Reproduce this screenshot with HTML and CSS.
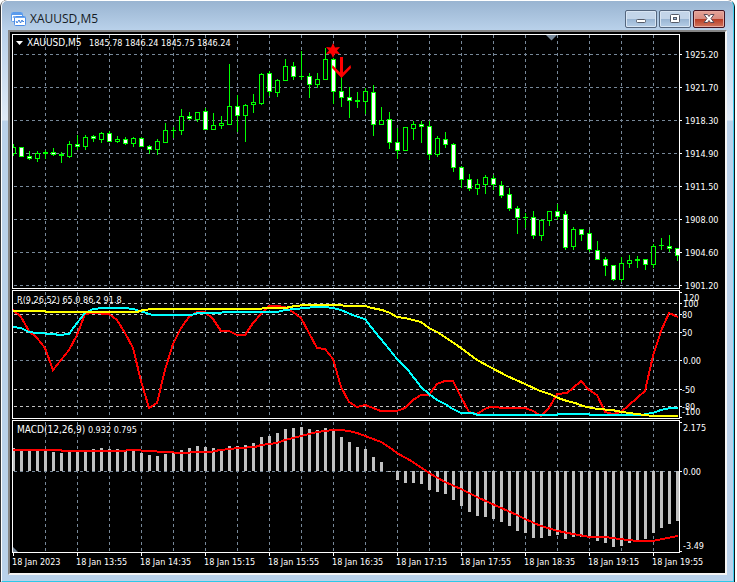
FILE: index.html
```html
<!DOCTYPE html>
<html lang="en">
<head>
<meta charset="utf-8">
<meta name="viewport" content="width=device-width, initial-scale=1">
<title>XAUUSD,M5</title>
<link rel="stylesheet" href="styles.css">
</head>
<body>
<main class="window">
  <div class="frame">
    <header class="titlebar">
      <svg class="app-icon" viewBox="0 0 15 14" aria-hidden="true">
        <rect x=".5" y=".5" width="11" height="9" rx="1" fill="#fff" stroke="#5b9bec"/>
        <path d="M1 2h10" stroke="#5b9bec" stroke-width="2"/>
        <path d="M2 6l1-2 1 2 1-1" fill="none" stroke="#78a8ea"/>
        <rect x="3.500" y="4.500" width="11" height="9" rx="1" fill="#fff" stroke="#4d8ee8"/>
        <path d="M4 5.500h10" stroke="#6aa5ef" stroke-width="1"/>
        <path d="M5 9l1 2 2-3 1.500 3 1.500-3 1 2 1-1" fill="none" stroke="#3f83df"/>
      </svg>
      <h1 class="title">XAUUSD,M5</h1>
      <div class="controls">
        <button class="control" type="button" aria-label="Minimize">
          <svg viewBox="0 0 12 10"><rect x="1.500" y="5.500" width="9" height="3" rx="1" fill="#fff" stroke="#555b68"/></svg>
        </button>
        <button class="control" type="button" aria-label="Maximize">
          <svg viewBox="0 0 12 10"><rect x="1.500" y=".5" width="9" height="8" rx="1" fill="#fff" stroke="#555b68"/><rect x="4.500" y="3.500" width="3" height="2" fill="#9bb8d6" stroke="#555b68"/></svg>
        </button>
        <button class="control close" type="button" aria-label="Close">
          <svg viewBox="0 0 12 10"><path d="M1 .5h3.500L6 2.500 7.500.5H11L8 4.500l3 4H7.500L6 6.500l-1.500 2H1l3-4z" fill="#fff" stroke="#5b4a55"/></svg>
        </button>
      </div>
    </header>
    <section class="client" aria-label="Chart">
      <svg class="panel" id="price" viewBox="10 32 715 257">
        <g class="grid"></g>
        <g class="marks" clip-path="url(#plot-area)"></g>
        <clipPath id="plot-area"><rect x="13" y="35" width="666" height="253"/></clipPath>
        <path class="edge" d="M12.500 289V34.500H679.500V288.500H12.500"/>
        <path class="marker" d="M546 35h11l-5.500 5.500z"/>
        <path class="signal" d="M333 43l2 4.500 5-.5-3 3.500 3 3.500-5-.5-2 4.500-2-4.500-5 .5 3-3.500-3-3.500 5 .5z"/>
        <path class="signal" d="M340 57h3v15.500l7.500-7.500.5 3-9.500 10-9.500-10 .5-3 7.500 7.500z"/>
        <path class="caret" d="M16 41h7l-3.500 4z"/>
        <text class="name" x="27" y="46">XAUUSD,M5</text>
        <text x="89" y="46">1845.78 1846.24 1845.75 1846.24</text>
        <g class="axis"></g>
      </svg>
      <svg class="panel" id="range" viewBox="10 289 715 130">
        <g class="grid"></g>
        <path class="edge" d="M12.500 419V290.500H679.500V418.500H12.500M680 292.500h1M680 417.500h1"/>
        <polyline class="line red" points="13,310 21,317 29,331 37,338 45,348 53,370 61,360 69,350 77,335 85,314 93,313 109,314 117,320 125,333 133,348 141,381 149,408 157,403 165,370 173,344 181,328 189,317 197,312 205,312 213,319 221,331 229,331 237,335 245,335 253,323 261,314 269,306 277,306 285,307 293,312 301,318 309,333 317,348 325,349 333,359 341,387 349,402 357,407 365,405 373,408 381,411 397,411 405,408 413,400 421,395 429,395 437,384 445,381 453,381 461,397 469,412 477,414 485,409 490,407 497,407 501,408 525,408 533,411 541,416 549,408 557,394 567,393 573,388 581,381 589,390 597,395 605,412 613,414 621,412 629,405 645,391 653,356 661,331 669,313 678,317"/>
        <polyline class="line cyan" points="13,327 21,328 29,332 37,333 53,334 60,335 69,334 77,323 85,313 93,309 103,308 125,308 133,309 143,312 153,315 192,315 197,313 220,313 224,312 277,312 285,310 295,309 305,308 315,307 325,307 333,308 341,310 355,316 365,319 375,332 385,344 397,359 408,370 421,387 429,394 437,400 445,404 453,409 461,413 472,413 478,415 557,415 558,414 589,414 590,415 643,415 645,414 653,413 661,410 670,408 678,408"/>
        <polyline class="line yellow" points="13,311 45,311 46,312 137,312 143,310 153,309 261,309 263,308 285,308 295,306 305,305 341,305 345,306 365,306 372,308 382,310 390,313 397,317 405,318 421,322 429,328 437,332 445,337 461,348 477,360 490,367 507,376 525,384 540,391 550,394 558,398 567,401 575,403 583,406 597,409 612,410 622,412 637,414 653,416 678,416"/>
        <text x="17" y="303">R(9,26,52) 65.0 86.2 91.8</text>
        <g class="axis"></g>
      </svg>
      <svg class="panel" id="macd" viewBox="10 419 715 154">
        <g class="grid"></g>
        <g class="marks"></g>
        <path class="edge" d="M12.500 552.500V420.500H679.500V552.500H12M680 422.500h1M680 551.500h1"/>
        <path class="marker" d="M13 547l5 5h-5z"/>
        <polyline class="line red" points="13,450 61,450 62,451 125,451 127,450 140,450 142,451 156,451 158,452 173,452 175,453 189,453 191,452 212,452 214,451 221,450 229,449 240,448 255,447 261,445 269,444 277,443 285,440 301,436 317,432 333,430 341,430 349,431 357,433 365,436 381,442 389,447 397,453 413,462 429,473 445,482 461,489 477,497 490,503 517,515 525,519 541,526 558,531 573,534 590,537 605,537 620,539 637,541 653,541 662,539 678,536"/>
        <text x="17" y="433"><tspan class="name">MACD(12,26,9)</tspan> 0.932 0.795</text>
        <g class="axis"></g>
      </svg>
    </section>
  </div>
</main>
<script src="chart.js"></script>
</body>
</html>
```
FILE: styles.css
```css
* {
  box-sizing: border-box;
}

body {
  margin: 0;
  background: #fff;
}

.window {
  margin-right: 2px;
  border-left: 1px solid #303338;
  border-right: 1px solid #101418;
  border-radius: 7px 7px 0 0;
  background: #17191c;
}

.frame {
  padding: 0 6px 6px;
  border: 1px solid #fff;
  border-right-color: #3fd0f0;
  border-bottom-color: #2cc8e8;
  border-radius: 6px 6px 0 0;
  background:
    linear-gradient(#99b4d1, #b9d1ea) top / 100% 29px no-repeat,
    linear-gradient(#b9d1ea 29px, #dfeaf6 119px, #b9d1ea 120px);
}

.titlebar {
  display: flex;
  align-items: center;
  height: 29px;
  padding: 6px 2px 0 3px;
}

.app-icon {
  width: 15px;
  height: 14px;
}

.title {
  flex: 1;
  margin: 0 0 0 4px;
  color: #151b24;
  font: 12px/18px "Open Sans", "Noto Sans", sans-serif;
}

.controls {
  display: flex;
  gap: 2px;
}

.control {
  display: flex;
  align-items: center;
  justify-content: center;
  width: 32px;
  height: 18px;
  padding: 0;
  border: 1px solid #54667e;
  border-radius: 2px;
  background: linear-gradient(#c3d5e9 50%, #98b4d2 50%, #b6cee7);
  box-shadow: inset 0 0 0 1px #d8e5f3;
}

.control svg {
  width: 12px;
  height: 10px;
}

.close {
  border-color: #431422;
  background: linear-gradient(#e5a398, #d98c80 50%, #b83a23 50%, #d0775f);
  box-shadow: inset 0 0 0 1px #e8aaa0;
}

.client {
  border: 2px solid #f4f4f4;
  border-top-color: #858585;
  border-left-color: #858585;
  background: #000;
}

.panel {
  display: block;
  width: 100%;
  height: auto;
  overflow: visible;
  fill: #fff;
  font: 9px "DejaVu Sans Condensed", "Noto Sans", sans-serif;
}

.name {
  font-size: 10px;
}

.grid,
.marks,
.edge,
.line,
.tick {
  shape-rendering: crispEdges;
}

.grid path {
  fill: none;
  stroke: #778899;
  stroke-dasharray: 3 3;
}

.grid .level {
  stroke: #c0c0c0;
}

.edge,
.tick {
  fill: none;
  stroke: #fff;
}

.wick {
  stroke: #00ff00;
}

.body {
  fill: #000;
  stroke: #00ff00;
}

.body.down {
  fill: #fff;
}

.bar {
  fill: #c0c0c0;
}

.marker {
  fill: #778899;
}

.signal {
  fill: #ff0000;
}

.line {
  fill: none;
  stroke-width: 2;
}

.red {
  stroke: #ff0000;
}

.cyan {
  stroke: #00ffff;
}

.yellow {
  stroke: #ffff00;
}
```
FILE: chart.js
```js
const NS = "http://www.w3.org/2000/svg";

function add(parent, name, attrs, text) {
  const node = document.createElementNS(NS, name);
  for (const key in attrs) node.setAttribute(key, attrs[key]);
  if (text) node.textContent = text;
  parent.append(node);
}

function group(panel, name) {
  return document.querySelector("#" + panel + " ." + name);
}

const xOf = i => 13 + i * 8;

function gridColumns(panel, top, bottom) {
  for (let x = 45; x < 679; x += 32) {
    add(group(panel, "grid"), "path", { d: `M${x + 0.5} ${top}V${bottom}` });
  }
}

function gridRow(panel, y, level) {
  add(group(panel, "grid"), "path", {
    d: `M14 ${y + 0.5}H679`, class: level ? "level" : "base"
  });
}

function axisLabel(panel, y, x, label, baseline) {
  add(group(panel, "axis"), "path", { class: "tick", d: `M680 ${y + 0.5}h2` });
  add(group(panel, "axis"), "text", { x, y: baseline || y + 4 }, label);
}

gridColumns("price", 35, 288);
["1925.20", "1921.70", "1918.30", "1914.90", "1911.50", "1908.00", "1904.60", "1901.20"]
  .forEach((label, i) => {
    gridRow("price", 54 + i * 33);
    axisLabel("price", 54 + i * 33, 685, label);
  });

/* Each candle: high, body top, body bottom, low, 1 when it closed lower. */
const candles = [
  [144,147,153,155,0],[147,147,156,156,1],[151,156,158,159,1],[151,153,158,161,0],
  [150,152,153,158,0],[148,152,154,155,1],[152,154,155,162,0],[141,144,156,157,0],
  [135,144,146,149,1],[135,137,146,149,0],[135,136,138,141,1],[132,133,139,142,0],
  [131,133,141,141,1],[136,139,141,142,0],[137,139,143,144,1],[137,138,143,146,0],
  [137,138,146,146,1],[145,146,149,153,1],[139,141,149,154,0],[123,130,142,142,0],
  [127,130,130,137,0],[109,116,130,134,0],[112,116,118,119,1],[112,112,119,121,0],
  [108,111,129,129,1],[113,125,129,129,0],[116,123,125,128,0],[64,106,124,124,0],
  [95,106,115,131,1],[104,105,115,141,0],[94,102,104,112,0],[73,74,103,104,0],
  [71,73,91,95,1],[79,80,92,96,0],[59,66,80,80,0],[62,66,76,79,1],
  [51,76,76,79,0],[73,76,84,97,1],[73,79,84,87,0],[48,59,79,79,0],
  [58,59,91,103,1],[77,91,97,106,1],[87,97,100,117,1],[92,100,101,107,0],
  [88,91,101,113,0],[85,92,124,135,1],[107,120,124,124,0],[112,119,142,148,1],
  [128,142,150,158,1],[127,127,150,150,0],[121,124,128,139,0],[121,124,126,142,1],
  [121,126,154,159,1],[136,138,154,156,0],[132,139,144,147,1],[143,144,167,171,1],
  [166,167,179,187,1],[174,179,188,190,1],[179,184,188,194,0],[175,177,184,193,0],
  [175,178,184,189,1],[181,185,195,197,1],[188,194,208,210,1],[206,208,217,233,1],
  [213,217,217,227,0],[211,217,235,238,1],[219,220,235,240,0],[211,211,220,225,0],
  [204,211,216,219,1],[211,214,247,249,1],[227,229,246,249,0],[229,229,234,240,1],
  [230,233,249,251,1],[241,250,259,259,1],[257,259,265,275,1],[265,265,279,280,1],
  [257,263,279,281,0],[255,260,263,267,0],[256,259,260,267,0],[259,259,264,269,1],
  [244,246,264,267,0],[238,245,245,249,0],[235,246,248,251,1],[248,248,255,260,1]
];

candles.forEach(([high, top, bottom, low, down], i) => {
  const marks = group("price", "marks");
  const x = xOf(i) + 0.5;
  add(marks, "path", { class: "wick", d: `M${x} ${high}V${low + 1}` });
  if (top === bottom) {
    add(marks, "path", { class: "wick", d: `M${x - 2.5} ${top + 0.5}h5` });
  } else {
    add(marks, "rect", {
      class: down ? "body down" : "body",
      x: x - 2, y: top + 0.5, width: 4, height: bottom - top
    });
  }
});

gridColumns("range", 292, 418);
[[303, 1], [314, 1], [332, 1], [360, 0], [389, 1], [406, 1]]
  .forEach(([y, level]) => gridRow("range", y, level));
[[292, 684, "120", 301], [303, 683, "100", 307], [314, 682, "80"], [332, 682, "50"],
 [360, 683, "0.00"], [389, 682, "-50"], [406, 682, "-80"], [417, 682, "-100", 415]]
  .forEach(([y, x, label, baseline]) => axisLabel("range", y, x, label, baseline));

gridColumns("macd", 422, 552);
gridRow("macd", 471);
axisLabel("macd", 422, 683, "2.175", 431);
axisLabel("macd", 471, 683, "0.00");
axisLabel("macd", 551, 683, "-3.49", 549);

/* The end of each histogram bar, measured from the zero line at 471. */
[448,451,451,451,451,452,453,452,451,450,449,448,449,449,450,450,453,455,456,454,452,
 450,448,446,447,448,449,446,446,445,443,437,436,433,429,428,427,429,430,428,431,437,
 442,447,449,457,462,472,480,483,483,484,490,492,494,500,506,512,516,517,519,522,526,
 531,533,538,538,536,535,539,537,537,538,541,543,547,546,543,542,539,533,528,524,521]
  .forEach((end, i) => {
    const left = Math.max(13, xOf(i) - 1);
    add(group("macd", "marks"), "rect", {
      class: "bar", x: left, y: Math.min(471, end),
      width: Math.min(679, xOf(i) + 2) - left, height: Math.abs(471 - end)
    });
  });

["18 Jan 2023", "18 Jan 13:55", "18 Jan 14:35", "18 Jan 15:15", "18 Jan 15:55",
 "18 Jan 16:35", "18 Jan 17:15", "18 Jan 17:55", "18 Jan 18:35", "18 Jan 19:15",
 "18 Jan 19:55"].forEach((label, i) => {
  add(group("macd", "axis"), "path", { class: "tick", d: `M${13.5 + i * 64} 553v3` });
  add(group("macd", "axis"), "text", { x: 12 + i * 64, y: 565 }, label);
});
```
